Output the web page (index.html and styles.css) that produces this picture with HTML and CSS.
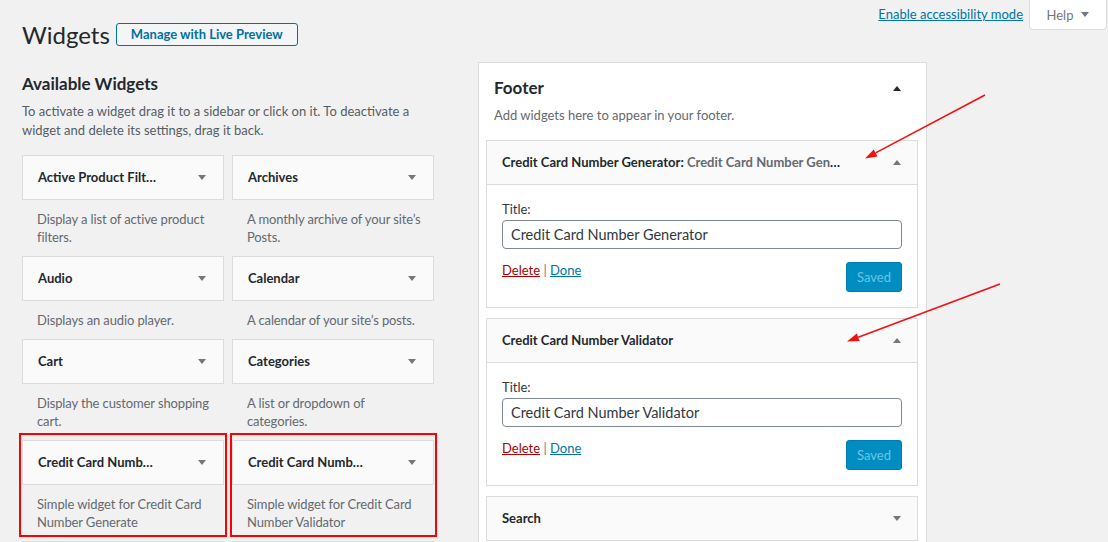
FILE: index.html
```html
<!DOCTYPE html>
<html lang="en">
<head>
<meta charset="utf-8">
<title>Widgets</title>
<link rel="stylesheet" href="styles.css">
</head>
<body>
<div class="page">
  <div class="topbar">
    <div class="title-row">
      <h1 class="page-title">Widgets</h1>
      <a class="btn-outline" href="#">Manage with Live Preview</a>
    </div>
    <div class="screen-meta">
      <a class="a11y-link" href="#">Enable accessibility mode</a>
      <div class="help-tab">Help <svg class="tri" width="8" height="5" viewBox="0 0 8 5"><path d="M0 0h8L4 5z" fill="#72777c"/></svg></div>
    </div>
  </div>

  <div class="main">
    <section class="left">
      <h2 class="section-title">Available Widgets</h2>
      <p class="intro">To activate a widget drag it to a sidebar or click on it. To deactivate a widget and delete its settings, drag it back.</p>
      <div class="grid">
        <div class="widget">
          <div class="widget-top"><div class="widget-title">Active Product Filters</div><div class="toggle"><svg width="8" height="5" viewBox="0 0 8 5"><path d="M0 0h8L4 5z" fill="#72777c"/></svg></div></div>
          <div class="widget-desc">Display a list of active product filters.</div>
        </div>
        <div class="widget">
          <div class="widget-top"><div class="widget-title">Archives</div><div class="toggle"><svg width="8" height="5" viewBox="0 0 8 5"><path d="M0 0h8L4 5z" fill="#72777c"/></svg></div></div>
          <div class="widget-desc">A monthly archive of your site’s Posts.</div>
        </div>
        <div class="widget">
          <div class="widget-top"><div class="widget-title">Audio</div><div class="toggle"><svg width="8" height="5" viewBox="0 0 8 5"><path d="M0 0h8L4 5z" fill="#72777c"/></svg></div></div>
          <div class="widget-desc">Displays an audio player.</div>
        </div>
        <div class="widget">
          <div class="widget-top"><div class="widget-title">Calendar</div><div class="toggle"><svg width="8" height="5" viewBox="0 0 8 5"><path d="M0 0h8L4 5z" fill="#72777c"/></svg></div></div>
          <div class="widget-desc">A calendar of your site’s posts.</div>
        </div>
        <div class="widget">
          <div class="widget-top"><div class="widget-title">Cart</div><div class="toggle"><svg width="8" height="5" viewBox="0 0 8 5"><path d="M0 0h8L4 5z" fill="#72777c"/></svg></div></div>
          <div class="widget-desc">Display the customer shopping cart.</div>
        </div>
        <div class="widget">
          <div class="widget-top"><div class="widget-title">Categories</div><div class="toggle"><svg width="8" height="5" viewBox="0 0 8 5"><path d="M0 0h8L4 5z" fill="#72777c"/></svg></div></div>
          <div class="widget-desc">A list or dropdown of categories.</div>
        </div>
        <div class="widget hl">
          <div class="widget-top"><div class="widget-title">Credit Card Number Generator</div><div class="toggle"><svg width="8" height="5" viewBox="0 0 8 5"><path d="M0 0h8L4 5z" fill="#72777c"/></svg></div></div>
          <div class="widget-desc">Simple widget for Credit Card Number Generate</div>
        </div>
        <div class="widget hl hl-r">
          <div class="widget-top"><div class="widget-title">Credit Card Number Validator</div><div class="toggle"><svg width="8" height="5" viewBox="0 0 8 5"><path d="M0 0h8L4 5z" fill="#72777c"/></svg></div></div>
          <div class="widget-desc">Simple widget for Credit Card Number Validator</div>
        </div>
        <div class="widget">
          <div class="widget-top"></div>
        </div>
        <div class="widget">
          <div class="widget-top"></div>
        </div>
      </div>
    </section>

    <section class="right">
      <div class="sidebar">
        <div class="sidebar-head">
          <h2 class="sidebar-name">Footer</h2>
          <svg width="8" height="5" viewBox="0 0 8 5"><path d="M0 5h8L4 0z" fill="#23282d"/></svg>
        </div>
        <p class="sidebar-desc">Add widgets here to appear in your footer.</p>
        <div class="sw-list">
          <div class="sw">
            <div class="sw-top">
              <div class="sw-title wide-pad">Credit Card Number Generator:<span class="in-title"> Credit Card Number Generator</span></div>
              <div class="sw-toggle"><svg width="8" height="5" viewBox="0 0 8 5"><path d="M0 5h8L4 0z" fill="#72777c"/></svg></div>
            </div>
            <div class="sw-body">
              <label class="field-label">Title:</label>
              <input class="field" type="text" value="Credit Card Number Generator">
              <div class="actions">
                <div class="links"><a class="del" href="#">Delete</a> <span class="sep">|</span> <a class="done" href="#">Done</a></div>
                <button class="saved" disabled>Saved</button>
              </div>
            </div>
          </div>
          <div class="sw">
            <div class="sw-top">
              <div class="sw-title">Credit Card Number Validator</div>
              <div class="sw-toggle"><svg width="8" height="5" viewBox="0 0 8 5"><path d="M0 5h8L4 0z" fill="#72777c"/></svg></div>
            </div>
            <div class="sw-body">
              <label class="field-label">Title:</label>
              <input class="field" type="text" value="Credit Card Number Validator">
              <div class="actions">
                <div class="links"><a class="del" href="#">Delete</a> <span class="sep">|</span> <a class="done" href="#">Done</a></div>
                <button class="saved" disabled>Saved</button>
              </div>
            </div>
          </div>
          <div class="sw collapsed">
            <div class="sw-top">
              <div class="sw-title">Search</div>
              <div class="sw-toggle"><svg width="8" height="5" viewBox="0 0 8 5"><path d="M0 0h8L4 5z" fill="#72777c"/></svg></div>
            </div>
          </div>
        </div>
      </div>
    </section>
  </div>

  <svg class="annot" width="1108" height="542" viewBox="0 0 1108 542">
    <line x1="985" y1="95" x2="875.6" y2="152.9" stroke="#f21010" stroke-width="1.6"/>
    <polygon points="865,158.5 877.5,156.4 873.7,149.4" fill="#f21010"/>
    <line x1="1000" y1="284" x2="858.2" y2="337.3" stroke="#f21010" stroke-width="1.6"/>
    <polygon points="847,341.5 859.6,341 856.8,333.6" fill="#f21010"/>
  </svg>
</div>
</body>
</html>
```

FILE: styles.css
```css
html, body {
  margin: 0;
  padding: 0;
  overflow: hidden;
}

body {
  background: #f1f1f1;
  font-family: Lato, "Open Sans", sans-serif;
  font-size: 13px;
  color: #444;
}

.page {
  position: relative;
  height: 542px;
  overflow: hidden;
}

/* top bar */
.topbar {
  display: flex;
  align-items: flex-start;
  padding-left: 22px;
}

.title-row {
  display: flex;
  align-items: center;
  gap: 6px;
  margin-top: 23px;
}

.page-title {
  margin: 0;
  font-size: 24px;
  font-weight: 400;
  line-height: 23px;
  color: #23282d;
}

.btn-outline {
  display: inline-block;
  height: 23px;
  box-sizing: border-box;
  padding: 0 14px;
  border: 1px solid #0071a1;
  border-radius: 3px;
  background: #f3f5f6;
  color: #0071a1;
  font-weight: 700;
  font-size: 13px;
  line-height: 21px;
  text-decoration: none;
}

.screen-meta {
  margin-left: auto;
  margin-right: 1px;
  display: flex;
  align-items: flex-start;
  gap: 6px;
}

.a11y-link {
  margin-top: 5px;
  color: #0073aa;
  text-decoration: underline;
  line-height: 18px;
}

.help-tab {
  width: 78px;
  height: 30px;
  box-sizing: border-box;
  background: #fff;
  border: 1px solid #dcdcde;
  border-top: none;
  border-radius: 0 0 4px 4px;
  display: flex;
  align-items: center;
  justify-content: center;
  gap: 8px;
  color: #72777c;
  font-size: 13px;
}

/* main columns */
.main {
  display: flex;
  align-items: flex-start;
  padding-left: 22px;
}

.left {
  width: 412px;
}

.right {
  width: 449px;
  margin-left: 44px;
}

.section-title {
  margin: 26px 0 0;
  font-size: 17px;
  line-height: 24px;
  font-weight: 700;
  color: #23282d;
}

.intro {
  margin: 6px 0 0;
  line-height: 19px;
  color: #555d66;
}

.grid {
  margin-top: 15px;
  display: grid;
  grid-template-columns: 202px 202px;
  column-gap: 8px;
}

.widget {
  position: relative;
}

.widget-top {
  height: 45px;
  box-sizing: border-box;
  border: 1px solid #dcdcde;
  background: #fafafa;
  display: flex;
  align-items: center;
}

.widget-title {
  flex: 1;
  min-width: 0;
  padding: 0 22px 0 15px;
  font-weight: 700;
  color: #23282d;
  white-space: nowrap;
  overflow: hidden;
  text-overflow: ellipsis;
  line-height: 18px;
  margin-top: -1px;
}

.toggle {
  width: 42px;
  display: flex;
  justify-content: center;
}

.toggle svg, .sw-toggle svg, .sidebar-head svg {
  display: block;
}

.widget-desc {
  padding: 10px 13px 10px 15px;
  line-height: 18px;
  letter-spacing: -0.12px;
  color: #646970;
}

.hl::after {
  content: "";
  position: absolute;
  top: -7px;
  left: -3px;
  right: -3px;
  bottom: 4px;
  border: 2px solid #ff0000;
  pointer-events: none;
}

.hl-r::after {
  left: -2px;
}

/* sidebar */
.sidebar {
  margin-top: 16px;
  border: 1px solid #dcdcde;
  background: #fff;
  padding: 13px 8px 20px 7px;
}

.sidebar-head {
  display: flex;
  align-items: center;
  justify-content: space-between;
  padding: 0 17px 0 8px;
}

.sidebar-name {
  margin: 0;
  font-size: 17px;
  line-height: 24px;
  font-weight: 700;
  color: #23282d;
}

.sidebar-desc {
  margin: 6px 0 0 8px;
  line-height: 19px;
  color: #646970;
}

.sw-list {
  margin-top: 15px;
}

.sw {
  border: 1px solid #dcdcde;
  margin-bottom: 10px;
}

.sw-top {
  height: 44px;
  box-sizing: border-box;
  border-bottom: 1px solid #dcdcde;
  background: #fafafa;
  display: flex;
  align-items: center;
}

.collapsed .sw-top {
  border-bottom: none;
  height: 43px;
}

.sw-title {
  flex: 1;
  min-width: 0;
  padding: 0 15px;
  font-weight: 700;
  color: #23282d;
  white-space: nowrap;
  overflow: hidden;
  text-overflow: ellipsis;
  line-height: 18px;
  margin-top: -1px;
}

.sw-title.wide-pad {
  padding-right: 32px;
}

.in-title {
  color: #646970;
}

.sw-toggle {
  width: 40px;
  display: flex;
  justify-content: center;
}

.sw-body {
  padding: 15px;
  background: #fff;
}

.field-label {
  display: block;
  line-height: 19px;
  color: #32373c;
}

.field {
  display: block;
  width: 100%;
  height: 29px;
  box-sizing: border-box;
  margin-top: 1px;
  padding: 0 8px;
  border: 1px solid #7e8993;
  border-radius: 4px;
  background: #fff;
  font-family: Lato, "Open Sans", sans-serif;
  font-size: 14.5px;
  color: #32373c;
}

.actions {
  margin-top: 13px;
  display: flex;
  justify-content: space-between;
  align-items: flex-start;
}

.links {
  line-height: 17px;
}

.del {
  color: #a00;
  text-decoration: underline;
}

.sep {
  color: #72777c;
}

.done {
  color: #0073aa;
  text-decoration: underline;
}

.saved {
  height: 30px;
  padding: 0 10px;
  border: 1px solid #007cb2;
  border-radius: 3px;
  background: #008ec2;
  color: #66c6e4;
  font-family: Lato, "Open Sans", sans-serif;
  font-size: 13px;
}

/* annotation overlay */
.annot {
  position: absolute;
  top: 0;
  left: 0;
  pointer-events: none;
}
```
